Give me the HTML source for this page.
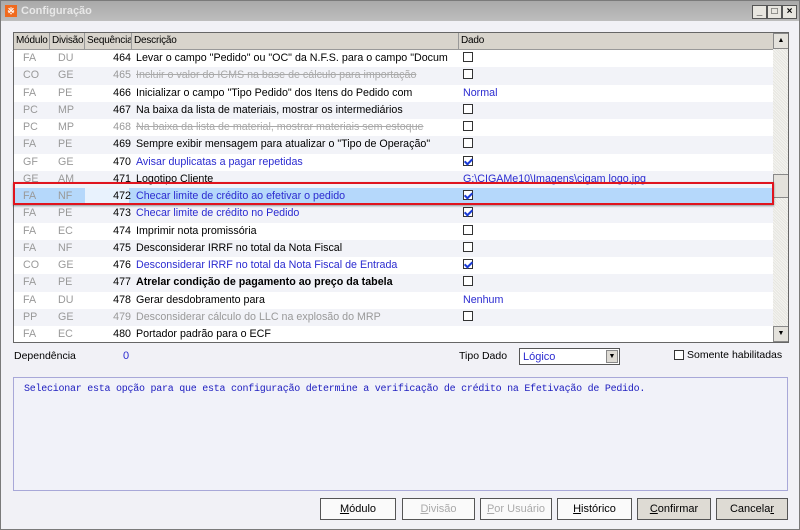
<!DOCTYPE html>
<html><head><meta charset="utf-8"><style>
*{margin:0;padding:0;box-sizing:border-box}
body{width:800px;height:530px;overflow:hidden;background:#f0f0f5;font-family:"Liberation Sans",sans-serif;font-size:11px;position:relative;color:#000}
.win{position:absolute;left:0;top:0;width:800px;height:530px;border:1px solid #7a7a7a;background:#f1f1f6}
.title{position:absolute;left:0;top:0;width:798px;height:20px;background:linear-gradient(#a9a9a9,#bdbdbd);color:#e8e8e8;font-weight:bold;font-size:11px;line-height:20px;padding-left:20px}
.ico{position:absolute;left:4px;top:4px;width:12px;height:12px;background:#f06a1e;color:#fff;font-size:9px;line-height:12px;text-align:center}
.tb{position:absolute;top:4px;width:15px;height:14px;background:#e8e6e0;border:1px solid #555;font-size:10px;line-height:12px;text-align:center;color:#000;font-weight:bold}
.grid{position:absolute;left:12px;top:31px;width:776px;height:311px;border:1px solid #666;background:#fff;overflow:hidden}
.hdr{position:absolute;left:0;top:0;height:17px;width:759px;background:#d8d4cc;border-bottom:1px solid #999;font-size:10px;letter-spacing:-0.2px}
.hdr div{position:absolute;top:0;height:17px;line-height:16px;padding-left:2px;border-right:1px solid #999;white-space:nowrap;overflow:hidden}
.row{position:absolute;left:0;width:759px;height:17.25px;line-height:17px;font-size:10.7px}
.row span{position:absolute;top:0;white-space:nowrap}
.c1{left:9px;color:#999}.c2{left:44px;color:#999}.c3{right:642px;text-align:right}.c4{left:122px}.c5{left:449px}
.cb{display:inline-block;width:10px;height:10px;border:1px solid #333;background:#fff;vertical-align:middle;margin-top:-2px;position:relative}
.cb.on:after{content:"";position:absolute;left:2px;top:0px;width:3px;height:6px;border:solid #1a3bd6;border-width:0 2px 2px 0;transform:rotate(45deg)}
.blue{color:#2b2bd0}.gray{color:#999}.strike{text-decoration:line-through;color:#aaa}
.sb{position:absolute;left:759px;top:0;width:16px;height:309px;background:#ecebe6;background-image:repeating-linear-gradient(45deg,#e6e5e0 0 1px,#f4f4f0 1px 2px)}
.sbb{position:absolute;left:0;width:16px;height:16px;background:#e4e2dc;border:1px solid #888;font-size:7px;text-align:center;line-height:14px}
.btn{position:absolute;top:497px;height:22px;border:1px solid #555;background:#fafafa;text-align:center;line-height:20px;font-size:11px}
.btn.g{background:#dedbd4}
.btn.d{color:#aaa}
</style></head><body>
<div class="win">
<div class="title"><div class="ico">※</div>Configuração
<div class="tb" style="left:751px">_</div><div class="tb" style="left:766px">□</div><div class="tb" style="left:781px">×</div></div>

<div class="grid">
<div class="hdr">
<div style="left:0;width:36px">Módulo</div>
<div style="left:36px;width:35px">Divisão</div>
<div style="left:71px;width:47px">Sequência</div>
<div style="left:118px;width:327px">Descrição</div>
<div style="left:445px;width:314px;border-right:none">Dado</div>
</div>
<div class="row" style="top:17px;background:#fff"><span class="c1">FA</span><span class="c2">DU</span><span class="c3">464</span><span class="c4">Levar o campo "Pedido" ou "OC" da N.F.S. para o campo "Docum</span><span class="c5"><i class="cb"></i></span></div>
<div class="row" style="top:34.25px;background:#f2f3f8"><span class="c1">CO</span><span class="c2">GE</span><span class="c3 gray">465</span><span class="c4 strike">Incluir o valor do ICMS na base de cálculo para importação</span><span class="c5"><i class="cb"></i></span></div>
<div class="row" style="top:51.5px;background:#fff"><span class="c1">FA</span><span class="c2">PE</span><span class="c3">466</span><span class="c4">Inicializar o campo "Tipo Pedido" dos Itens do Pedido com</span><span class="c5 blue">Normal</span></div>
<div class="row" style="top:68.75px;background:#f2f3f8"><span class="c1">PC</span><span class="c2">MP</span><span class="c3">467</span><span class="c4">Na baixa da lista de materiais, mostrar os intermediários</span><span class="c5"><i class="cb"></i></span></div>
<div class="row" style="top:86px;background:#fff"><span class="c1">PC</span><span class="c2">MP</span><span class="c3 gray">468</span><span class="c4 strike">Na baixa da lista de material, mostrar materiais sem estoque</span><span class="c5"><i class="cb"></i></span></div>
<div class="row" style="top:103.25px;background:#f2f3f8"><span class="c1">FA</span><span class="c2">PE</span><span class="c3">469</span><span class="c4">Sempre exibir mensagem para atualizar o "Tipo de Operação"</span><span class="c5"><i class="cb"></i></span></div>
<div class="row" style="top:120.5px;background:#fff"><span class="c1">GF</span><span class="c2">GE</span><span class="c3">470</span><span class="c4 blue">Avisar duplicatas a pagar repetidas</span><span class="c5"><i class="cb on"></i></span></div>
<div class="row" style="top:137.75px;background:#f2f3f8"><span class="c1">GE</span><span class="c2">AM</span><span class="c3">471</span><span class="c4">Logotipo Cliente</span><span class="c5 blue">G:\CIGAMe10\Imagens\cigam logo.jpg</span></div>
<div class="row" style="top:155px;background:#b5d8fb"><span class="c1">FA</span><span class="c2">NF</span><span style="left:71px;width:44px;height:17px;background:#e8f2fd"></span><span class="c3">472</span><span class="c4 blue">Checar limite de crédito ao efetivar o pedido</span><span class="c5"><i class="cb on"></i></span></div>
<div class="row" style="top:172.25px;background:#f2f3f8"><span class="c1">FA</span><span class="c2">PE</span><span class="c3">473</span><span class="c4 blue">Checar limite de crédito no Pedido</span><span class="c5"><i class="cb on"></i></span></div>
<div class="row" style="top:189.5px;background:#fff"><span class="c1">FA</span><span class="c2">EC</span><span class="c3">474</span><span class="c4">Imprimir nota promissória</span><span class="c5"><i class="cb"></i></span></div>
<div class="row" style="top:206.75px;background:#f2f3f8"><span class="c1">FA</span><span class="c2">NF</span><span class="c3">475</span><span class="c4">Desconsiderar IRRF no total da Nota Fiscal</span><span class="c5"><i class="cb"></i></span></div>
<div class="row" style="top:224px;background:#fff"><span class="c1">CO</span><span class="c2">GE</span><span class="c3">476</span><span class="c4 blue">Desconsiderar IRRF no total da Nota Fiscal de Entrada</span><span class="c5"><i class="cb on"></i></span></div>
<div class="row" style="top:241.25px;background:#f2f3f8"><span class="c1">FA</span><span class="c2">PE</span><span class="c3">477</span><span class="c4" style="font-weight:bold">Atrelar condição de pagamento ao preço da tabela</span><span class="c5"><i class="cb"></i></span></div>
<div class="row" style="top:258.5px;background:#fff"><span class="c1">FA</span><span class="c2">DU</span><span class="c3">478</span><span class="c4">Gerar desdobramento para</span><span class="c5 blue">Nenhum</span></div>
<div class="row" style="top:275.75px;background:#f2f3f8"><span class="c1">PP</span><span class="c2">GE</span><span class="c3 gray">479</span><span class="c4 gray">Desconsiderar cálculo do LLC na explosão do MRP</span><span class="c5"><i class="cb"></i></span></div>
<div class="row" style="top:293px;background:#fff"><span class="c1">FA</span><span class="c2">EC</span><span class="c3">480</span><span class="c4">Portador padrão para o ECF</span></div>
<div class="sb">
<div class="sbb" style="top:0">▲</div>
<div class="sbb" style="top:141px;height:24px"></div>
<div class="sbb" style="top:293px">▼</div>
</div>
</div>
<div style="position:absolute;left:12px;top:181px;width:761px;height:23px;border:2px solid #e0141e;box-shadow:0 1px 2px rgba(0,0,0,.4)"></div>

<div style="position:absolute;left:13px;top:349px;font-size:10.5px">Dependência</div>
<div style="position:absolute;left:122px;top:349px;color:#2b2bd0">0</div>
<div style="position:absolute;left:458px;top:349px;font-size:10.5px">Tipo Dado</div>
<div style="position:absolute;left:518px;top:347px;width:101px;height:17px;border:1px solid #555;background:#fff;line-height:16px;padding-left:3px;color:#2b2bd0">Lógico<div style="position:absolute;right:1px;top:1px;width:12px;height:13px;background:#dedbd4;border:1px solid #888;font-size:7px;text-align:center;line-height:12px;color:#000">▼</div></div>
<div style="position:absolute;left:673px;top:349px;width:10px;height:10px;border:1px solid #333;background:#fff"></div>
<div style="position:absolute;left:686px;top:348px;font-size:10.5px">Somente habilitadas</div>

<div style="position:absolute;left:12px;top:376px;width:775px;height:114px;border:1px solid #a8a8d8;background:#f1f2f9"></div>
<div style="position:absolute;left:23px;top:383px;font-family:'Liberation Mono',monospace;font-size:10px;letter-spacing:-0.25px;color:#2020c0;white-space:nowrap">Selecionar esta opção para que esta configuração determine a verificação de crédito na Efetivação de Pedido.</div>

<div class="btn" style="left:319px;width:76px"><u>M</u>ódulo</div>
<div class="btn d" style="left:401px;width:73px"><u>D</u>ivisão</div>
<div class="btn d" style="left:479px;width:72px"><u>P</u>or Usuário</div>
<div class="btn" style="left:556px;width:75px"><u>H</u>istórico</div>
<div class="btn g" style="left:636px;width:74px"><u>C</u>onfirmar</div>
<div class="btn g" style="left:715px;width:72px">Cancela<u>r</u></div>
</div>
</body></html>
